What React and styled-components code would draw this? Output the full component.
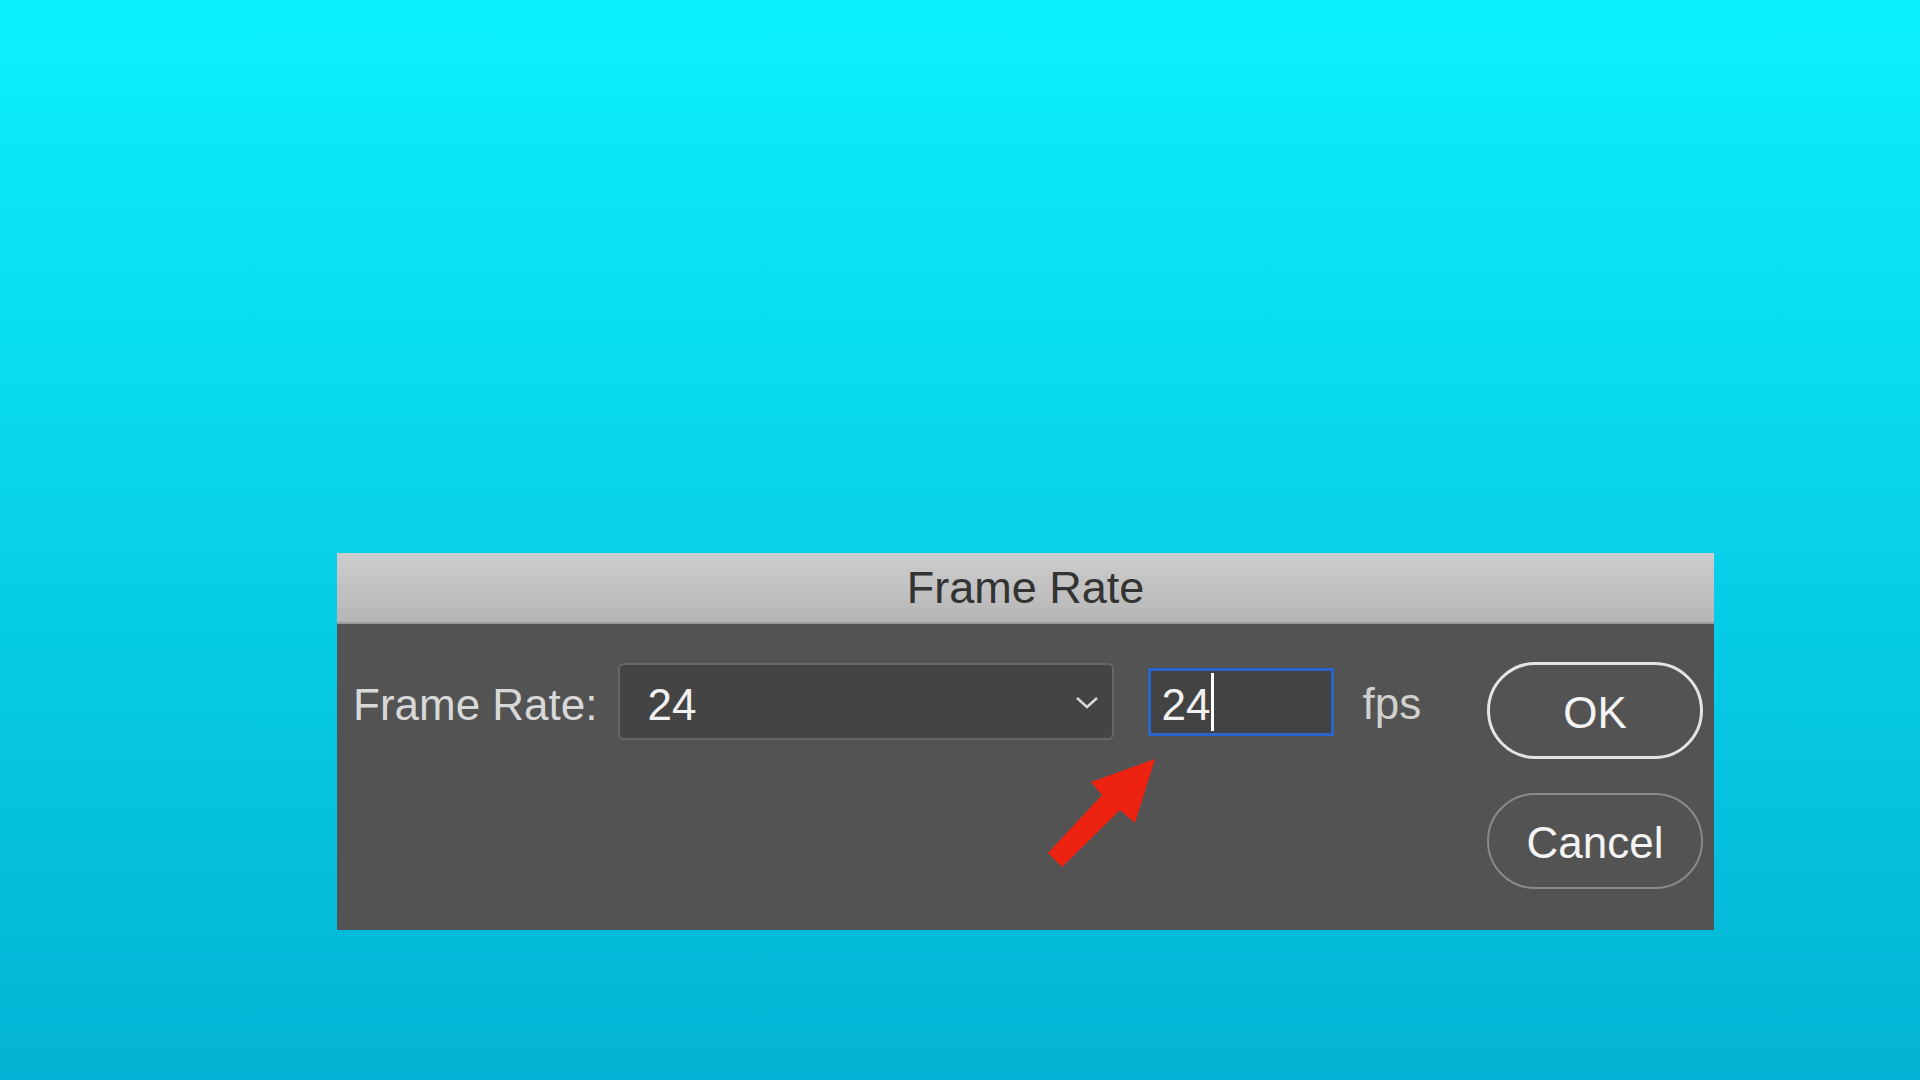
import React from 'react';
import styled, { createGlobalStyle } from 'styled-components';

const GlobalStyle = createGlobalStyle`
  html, body {
    margin: 0;
    padding: 0;
  }
  body {
    font-family: 'Liberation Sans', Arial, sans-serif;
  }
`;

const Page = styled.div`
  width: 1920px;
  height: 1080px;
  box-sizing: border-box;
  padding: 553px 0 0 337px;
  background: linear-gradient(#0cf0ff, #03b2d4);
  overflow: hidden;
`;

const Dialog = styled.div`
  position: relative;
  width: 1377px;
  height: 377px;
  display: flex;
  flex-direction: column;
  background: #535353;
`;

const TitleBar = styled.div`
  height: 71px;
  display: flex;
  align-items: center;
  justify-content: center;
  background: linear-gradient(#cdcdcd, #b6b6b6);
  border-bottom: 2px solid #9c9c9c;
  color: #333;
  font-size: 45px;
  padding-top: 1px;
  box-sizing: border-box;
`;

const Body = styled.div`
  flex: 1;
  display: flex;
  align-items: flex-start;
  padding: 39px 11px 0 16px;
`;

const Fields = styled.div`
  display: flex;
  align-items: center;
  height: 77px;
`;

const Label = styled.span`
  color: #d8d8d8;
  font-size: 44px;
  margin-right: 20px;
  padding-top: 7px;
`;

const Select = styled.div`
  width: 496px;
  height: 77px;
  box-sizing: border-box;
  display: flex;
  align-items: center;
  justify-content: space-between;
  padding: 7px 12px 0 28px;
  background: #444;
  border: 2px solid #666;
  border-radius: 6px;
  color: #f2f2f2;
  font-size: 44px;
  margin-right: 34px;
`;

const Chevron = styled.svg`
  width: 26px;
  height: 16px;
  margin-top: -4px;
`;

const Input = styled.div`
  width: 186px;
  height: 68px;
  box-sizing: border-box;
  display: flex;
  align-items: center;
  padding: 6px 0 0 11px;
  background: #434343;
  border: 3px solid #2a66c9;
  color: #f2f2f2;
  font-size: 44px;
  margin-right: 29px;
`;

const Caret = styled.span`
  display: inline-block;
  width: 3px;
  height: 58px;
  margin-left: 1px;
  margin-top: -6px;
  background: #fff;
`;

const Unit = styled.span`
  color: #d0d0d0;
  font-size: 44px;
  padding-top: 4px;
`;

const Buttons = styled.div`
  margin-left: auto;
  display: flex;
  flex-direction: column;
  gap: 34px;
  margin-top: -1px;
`;

const Button = styled.button`
  width: 216px;
  height: ${p => (p.$primary ? 97 : 96)}px;
  box-sizing: border-box;
  border-radius: 50px;
  background: transparent;
  border: ${p => (p.$primary ? '3px solid #e4e4e4' : '2px solid #8a8a8a')};
  color: #f4f4f4;
  font-family: 'Liberation Sans', Arial, sans-serif;
  font-size: 44px;
  padding: 4px 0 0;
`;

const Arrow = styled.svg`
  position: absolute;
  left: 703px;
  top: 202px;
  width: 125px;
  height: 120px;
`;

export default function App() {
  return (
    <>
      <GlobalStyle />
      <Page>
        <Dialog>
          <TitleBar>Frame Rate</TitleBar>
          <Body>
            <Fields>
              <Label>Frame Rate:</Label>
              <Select>
                <span>24</span>
                <Chevron viewBox="0 0 26 16">
                  <path d="M3 3 L13 12 L23 3" fill="none" stroke="#d8d8d8" strokeWidth="2.5" />
                </Chevron>
              </Select>
              <Input>
                24<Caret />
              </Input>
              <Unit>fps</Unit>
            </Fields>
            <Buttons>
              <Button $primary>OK</Button>
              <Button>Cancel</Button>
            </Buttons>
          </Body>
          <Arrow viewBox="1040 755 125 120">
            <polygon
              points="1155,759 1135,823 1120,810 1062,867 1048,853 1102,795 1091,782"
              fill="#ee2211"
            />
          </Arrow>
        </Dialog>
      </Page>
    </>
  );
}
